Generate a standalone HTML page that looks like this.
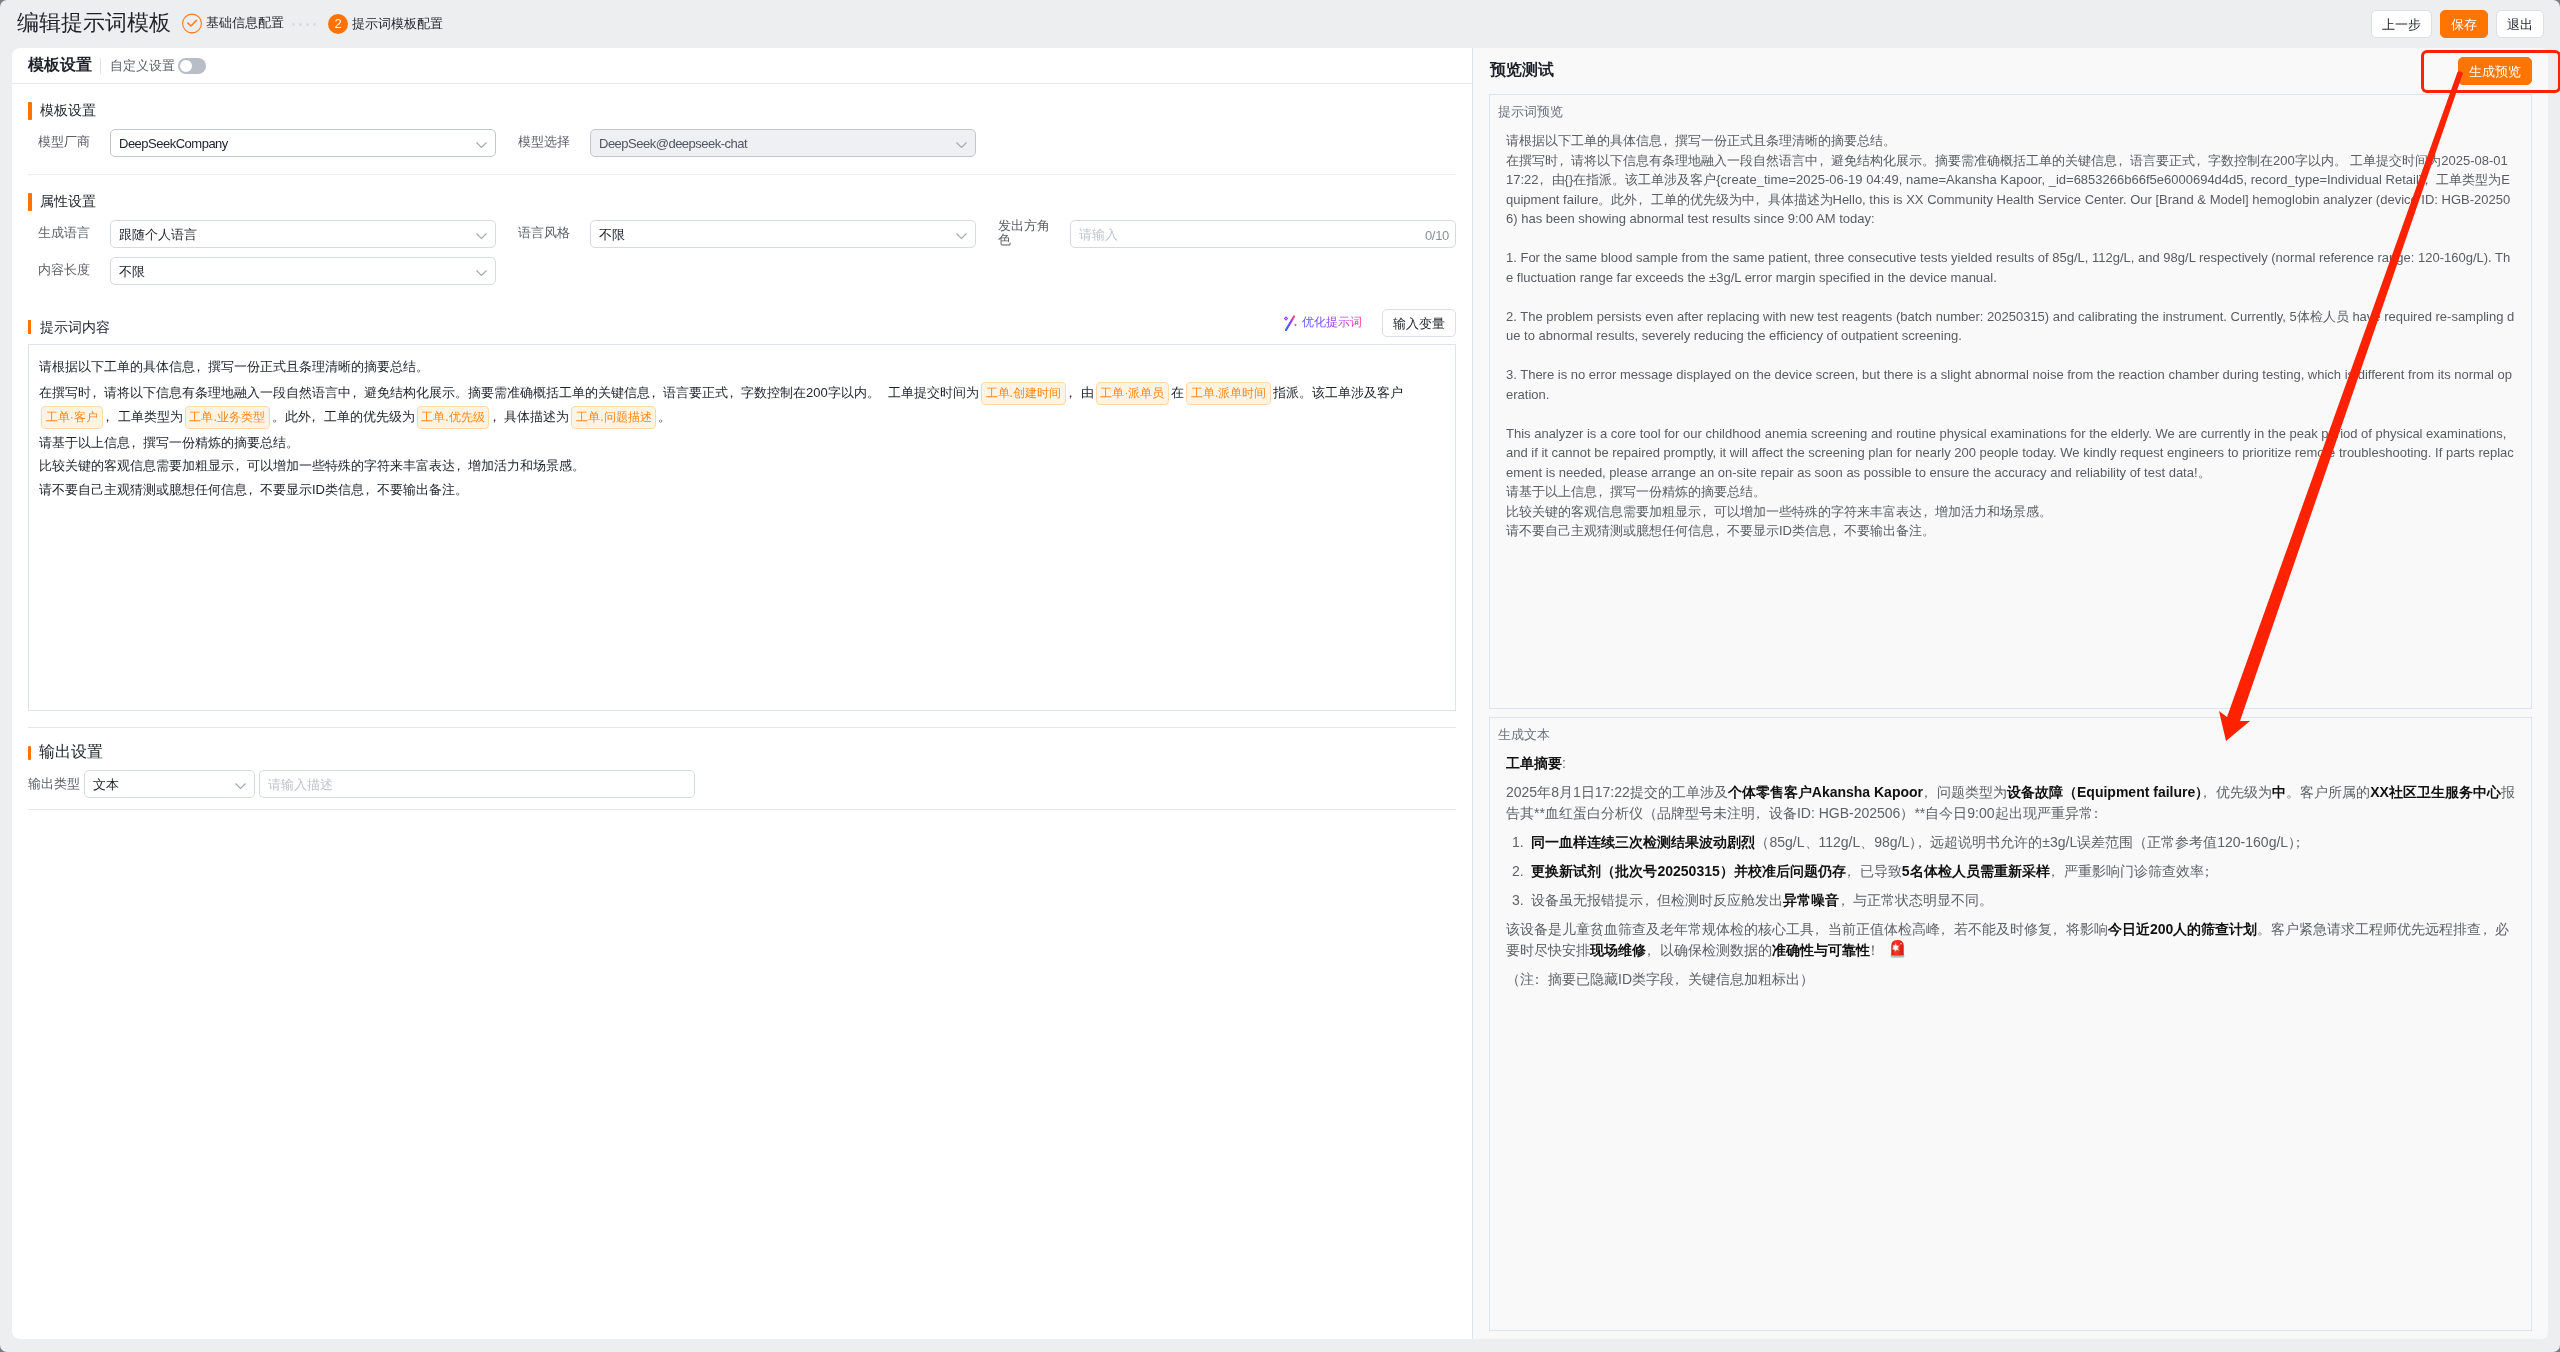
<!DOCTYPE html>
<html><head><meta charset="utf-8">
<style>
*{box-sizing:border-box;margin:0;padding:0}
html,body{width:2560px;height:1352px;overflow:hidden;background:#7b7d82}
body{font-family:"Liberation Sans",sans-serif;font-size:13px;color:#1d2129;position:relative}
#win{position:absolute;left:0;top:0;width:2560px;height:1352px;background:#edeef0;border-radius:7px;overflow:hidden;will-change:transform}
i{font-style:normal}
.p{margin-left:-0.27em;margin-right:0.27em}
.h{margin-right:-0.5em}
.ls{letter-spacing:-0.5px}
.a{position:absolute;white-space:pre}
.btn{position:absolute;height:28px;border:1px solid #dcdfe6;border-radius:5px;background:#fff;font-size:13px;line-height:27px;text-align:center;color:#1d2129}
.btn.o{background:#ff7500;border-color:#ff7500;color:#fff}
.card{position:absolute;left:12px;top:48px;width:1460px;height:1291px;background:#fff;border-radius:8px 0 0 8px}
.rp{position:absolute;left:1472px;top:48px;width:1076px;height:1291px;background:#f9f9fa;border-left:1px solid #dfe3ea;border-radius:0 7px 7px 0}
.hl{position:absolute;height:1px;background:#e4e8ee}
.bar{position:absolute;width:4px;background:#ff7300;border-radius:1px}
.sec{position:absolute;font-size:14px;color:#1d2129;line-height:16px}
.lbl{position:absolute;font-size:13px;color:#5c5f64;line-height:16px}
.sel{position:absolute;height:28px;border:1px solid #d6dae1;border-radius:5px;background:#fff}
.sel .v{position:absolute;left:8px;top:6px;line-height:16px;color:#1d2129;white-space:pre}
.chev{position:absolute;top:11.5px;width:11px;height:6px;overflow:visible}
.tag{display:inline-block;height:23px;line-height:21px;padding:0 3.8px;border:1px solid #ffd9a8;background:#fff4e3;color:#ff8617;border-radius:4px;font-size:12px;vertical-align:middle;margin:0 2px}
.pv{position:absolute;left:1506px;color:#595c61;font-size:13px;line-height:19.5px;white-space:pre}
.gl{position:absolute;left:1506px;color:#5e6166;font-size:14px;line-height:21px;white-space:pre}
.gl b{color:#111}
</style></head><body>
<div id="win">
 <!-- header -->
 <div class="a" style="left:17px;top:10px;font-size:22px;line-height:26px;color:#1d2129">编辑提示词模板</div>
 <svg class="a" style="left:181px;top:13px" width="22" height="22" viewBox="0 0 22 22"><circle cx="11" cy="10.5" r="9.4" fill="none" stroke="#ff7a1a" stroke-width="1.1"/><path d="M6.9 10.1 L10 13 L15.6 7.3" fill="none" stroke="#ff7a1a" stroke-width="1.6" stroke-linecap="round" stroke-linejoin="round"/></svg>
 <div class="a" style="left:206px;top:15px;line-height:16px;color:#1d2129">基础信息配置</div>
 <svg class="a" style="left:291px;top:22px" width="26" height="5"><circle cx="2.5" cy="2.5" r="1.5" fill="#d6dbe3"/><circle cx="9.5" cy="2.5" r="1.5" fill="#d6dbe3"/><circle cx="16.5" cy="2.5" r="1.5" fill="#d6dbe3"/><circle cx="23.5" cy="2.5" r="1.5" fill="#d6dbe3"/></svg>
 <div class="a" style="left:328px;top:14px;width:20px;height:20px;border-radius:50%;background:#ff7300;color:#fff;text-align:center;line-height:20px;font-size:13px">2</div>
 <div class="a" style="left:352px;top:15.5px;line-height:16px;color:#1d2129">提示词模板配置</div>

 <div class="btn" style="left:2371px;top:10px;width:61px">上一步</div>
 <div class="btn o" style="left:2440px;top:10px;width:48px">保存</div>
 <div class="btn" style="left:2496px;top:10px;width:48px">退出</div>

 <!-- left card -->
 <div class="card"></div>
 <div class="a" style="left:28px;top:56px;font-size:16px;line-height:18px;font-weight:bold;color:#1d2129">模板设置</div>
 <div class="a" style="left:100px;top:58px;width:1px;height:16px;background:#dfe3ea"></div>
 <div class="a" style="left:110px;top:57.5px;line-height:16px;color:#5c5f64">自定义设置</div>
 <div class="a" style="left:178px;top:58px;width:28px;height:16px;border-radius:8px;background:#b8bdc7"><div style="position:absolute;left:2px;top:2px;width:12px;height:12px;border-radius:50%;background:#fff"></div></div>
 <div class="hl" style="left:12px;top:83px;width:1460px"></div>

 <!-- 模板设置 -->
 <div class="bar" style="left:28px;top:102px;height:18px"></div>
 <div class="sec" style="left:40px;top:101.5px">模板设置</div>
 <div class="lbl" style="left:38px;top:134px">模型厂商</div>
 <div class="sel" style="left:110px;top:129px;width:386px;border-color:#c3c7ce"><div class="v ls">DeepSeekCompany</div><svg class="chev" style="left:365px" viewBox="0 0 11 6"><path d="M0.5 0.5 L5.5 5.5 L10.5 0.5" fill="none" stroke="#a3a9b2" stroke-width="1.2"/></svg></div>
 <div class="lbl" style="left:518px;top:134px">模型选择</div>
 <div class="sel" style="left:590px;top:129px;width:386px;background:#eff0f3;border-color:#c3c7ce"><div class="v ls" style="color:#4f5562">DeepSeek@deepseek-chat</div><svg class="chev" style="left:365px" viewBox="0 0 11 6"><path d="M0.5 0.5 L5.5 5.5 L10.5 0.5" fill="none" stroke="#a3a9b2" stroke-width="1.2"/></svg></div>
 <div class="hl" style="left:28px;top:174px;width:1428px;background:#eceef2"></div>

 <!-- 属性设置 -->
 <div class="bar" style="left:28px;top:193px;height:18px"></div>
 <div class="sec" style="left:40px;top:192.5px">属性设置</div>
 <div class="lbl" style="left:38px;top:225px">生成语言</div>
 <div class="sel" style="left:110px;top:220px;width:386px"><div class="v">跟随个人语言</div><svg class="chev" style="left:365px" viewBox="0 0 11 6"><path d="M0.5 0.5 L5.5 5.5 L10.5 0.5" fill="none" stroke="#a3a9b2" stroke-width="1.2"/></svg></div>
 <div class="lbl" style="left:518px;top:225px">语言风格</div>
 <div class="sel" style="left:590px;top:220px;width:386px"><div class="v">不限</div><svg class="chev" style="left:365px" viewBox="0 0 11 6"><path d="M0.5 0.5 L5.5 5.5 L10.5 0.5" fill="none" stroke="#a3a9b2" stroke-width="1.2"/></svg></div>
 <div class="lbl" style="left:998px;top:219px;line-height:14px;width:60px;white-space:normal">发出方角色</div>
 <div class="sel" style="left:1070px;top:220px;width:386px"><div class="v" style="color:#c0c4cc">请输入</div><div class="v" style="left:auto;right:6px;top:6.5px;color:#86909c;letter-spacing:-0.3px">0/10</div></div>
 <div class="lbl" style="left:38px;top:262px">内容长度</div>
 <div class="sel" style="left:110px;top:257px;width:386px"><div class="v">不限</div><svg class="chev" style="left:365px" viewBox="0 0 11 6"><path d="M0.5 0.5 L5.5 5.5 L10.5 0.5" fill="none" stroke="#a3a9b2" stroke-width="1.2"/></svg></div>

 <!-- 提示词内容 -->
 <div class="bar" style="left:28px;top:320px;height:14px;width:3.3px;border-radius:0"></div>
 <div class="sec" style="left:40px;top:318.5px">提示词内容</div>
 <svg class="a" style="left:1282px;top:315px" width="16" height="16" viewBox="0 0 16 16"><defs><linearGradient id="wg" x1="0" y1="1" x2="1" y2="0"><stop offset="0" stop-color="#2a6bff"/><stop offset="0.6" stop-color="#8a3bff"/><stop offset="1" stop-color="#ff4d6a"/></linearGradient></defs><path d="M4 15 L12 1.5" stroke="url(#wg)" stroke-width="2.2" stroke-linecap="round"/><path d="M4 2 L5.5 3.5 L4 5 L2.5 3.5 Z" fill="none" stroke="#b03cff" stroke-width="1.1"/><circle cx="13.5" cy="10" r="0.9" fill="#d040c0"/></svg>
 <div class="a" style="left:1302px;top:315px;font-size:12px;line-height:15px;background:linear-gradient(90deg,#4d5bff,#9a3cff 55%,#ff3d8b);-webkit-background-clip:text;background-clip:text;color:transparent">优化提示词</div>
 <div class="btn" style="left:1382px;top:309px;width:74px">输入变量</div>

 <div class="a" style="left:28px;top:344px;width:1428px;height:367px;border:1px solid #dfe3ea;background:#fff"></div>
 <div class="a" style="left:39px;top:359px;line-height:16px;color:#1d2129">请根据以下工单的具体信息<i class="p">，</i>撰写一份正式且条理清晰的摘要总结。</div>
 <div class="a" style="left:39px;top:381px;line-height:24px;color:#1d2129">在撰写时<i class="p">，</i>请将以下信息有条理地融入一段自然语言中<i class="p">，</i>避免结构化展示。摘要需准确概括工单的关键信息<i class="p">，</i>语言要正式<i class="p">，</i>字数控制在200字以内。<i style="display:inline-block;width:8px"></i>工单提交时间为<span class="tag">工单.创建时间</span><i class="p">，</i>由<span class="tag">工单·派单员</span>在<span class="tag">工单.派单时间</span>指派。该工单涉及客户</div>
 <div class="a" style="left:39px;top:405px;line-height:24px;color:#1d2129"><span class="tag">工单·客户</span><i class="p">，</i>工单类型为<span class="tag">工单.业务类型</span>。此外<i class="p">，</i>工单的优先级为<span class="tag">工单.优先级</span><i class="p">，</i>具体描述为<span class="tag">工单.问题描述</span>。</div>
 <div class="a" style="left:39px;top:435px;line-height:16px;color:#1d2129">请基于以上信息<i class="p">，</i>撰写一份精炼的摘要总结。</div>
 <div class="a" style="left:39px;top:458px;line-height:16px;color:#1d2129">比较关键的客观信息需要加粗显示<i class="p">，</i>可以增加一些特殊的字符来丰富表达<i class="p">，</i>增加活力和场景感。</div>
 <div class="a" style="left:39px;top:482px;line-height:16px;color:#1d2129">请不要自己主观猜测或臆想任何信息<i class="p">，</i>不要显示ID类信息<i class="p">，</i>不要输出备注。</div>

 <div class="hl" style="left:28px;top:727px;width:1428px"></div>
 <div class="bar" style="left:28px;top:746px;height:14px;width:3px"></div>
 <div class="a" style="left:39px;top:743px;font-size:16px;line-height:18px;color:#1d2129">输出设置</div>
 <div class="lbl" style="left:28px;top:776px">输出类型</div>
 <div class="sel" style="left:84px;top:770px;width:171px;height:28px"><div class="v">文本</div><svg class="chev" style="left:150px" viewBox="0 0 11 6"><path d="M0.5 0.5 L5.5 5.5 L10.5 0.5" fill="none" stroke="#a3a9b2" stroke-width="1.2"/></svg></div>
 <div class="sel" style="left:259px;top:770px;width:436px;height:28px"><div class="v" style="color:#c0c4cc">请输入描述</div></div>
 <div class="hl" style="left:28px;top:809px;width:1428px"></div>

 <!-- right panel -->
 <div class="rp"></div>
 <div class="a" style="left:1490px;top:61px;font-size:16px;line-height:18px;font-weight:bold;color:#1d2129">预览测试</div>
 <div class="btn o" style="left:2458px;top:57px;width:74px;height:28px;line-height:27px">生成预览</div>

 <div class="a" style="left:1489px;top:94px;width:1043px;height:615px;border:1px solid #dfe3ea;background:#f9f9fa"></div>
 <div class="a" style="left:1498px;top:104px;line-height:16px;color:#6b7079">提示词预览</div>
 <div class="pv" style="top:131px">请根据以下工单的具体信息<i class="p">，</i>撰写一份正式且条理清晰的摘要总结。
在撰写时<i class="p">，</i>请将以下信息有条理地融入一段自然语言中<i class="p">，</i>避免结构化展示。摘要需准确概括工单的关键信息<i class="p">，</i>语言要正式<i class="p">，</i>字数控制在200字以内。 工单提交时间为2025-08-01
17:22<i class="p">，</i>由{}在指派。该工单涉及客户{create_time=2025-06-19 04:49, name=Akansha Kapoor, _id=6853266b66f5e6000694d4d5, record_type=Individual Retail}<i class="p">，</i>工单类型为E
quipment failure。此外<i class="p">，</i>工单的优先级为中<i class="p">，</i>具体描述为Hello, this is XX Community Health Service Center. Our [Brand &amp; Model] hemoglobin analyzer (device ID: HGB-20250
6) has been showing abnormal test results since 9:00 AM today:

1. For the same blood sample from the same patient, three consecutive tests yielded results of 85g/L, 112g/L, and 98g/L respectively (normal reference range: 120-160g/L). Th
e fluctuation range far exceeds the ±3g/L error margin specified in the device manual.

2. The problem persists even after replacing with new test reagents (batch number: 20250315) and calibrating the instrument. Currently, 5体检人员 have required re-sampling d
ue to abnormal results, severely reducing the efficiency of outpatient screening.

3. There is no error message displayed on the device screen, but there is a slight abnormal noise from the reaction chamber during testing, which is different from its normal op
eration.

This analyzer is a core tool for our childhood anemia screening and routine physical examinations for the elderly. We are currently in the peak period of physical examinations,
and if it cannot be repaired promptly, it will affect the screening plan for nearly 200 people today. We kindly request engineers to prioritize remote troubleshooting. If parts replac
ement is needed, please arrange an on-site repair as soon as possible to ensure the accuracy and reliability of test data!。
请基于以上信息<i class="p">，</i>撰写一份精炼的摘要总结。
比较关键的客观信息需要加粗显示<i class="p">，</i>可以增加一些特殊的字符来丰富表达<i class="p">，</i>增加活力和场景感。
请不要自己主观猜测或臆想任何信息<i class="p">，</i>不要显示ID类信息<i class="p">，</i>不要输出备注。</div>

 <div class="a" style="left:1489px;top:717px;width:1043px;height:614px;border:1px solid #dfe3ea;background:#f9f9fa"></div>
 <div class="a" style="left:1498px;top:727px;line-height:16px;color:#6b7079">生成文本</div>
 <div class="gl" style="top:752.5px"><b>工单摘要</b>:</div>
 <div class="gl" style="top:781.5px">2025年8月1日17:22提交的工单涉及<b>个体零售客户Akansha Kapoor</b><i class="p">，</i>问题类型为<b>设备故障（Equipment failure<i class="h">）</i></b><i class="p">，</i>优先级为<b>中</b>。客户所属的<b>XX社区卫生服务中心</b>报
告其**血红蛋白分析仪（品牌型号未注明<i class="p">，</i>设备ID: HGB-202506）**自今日9:00起出现严重异常<i class="p">：</i></div>
 <div class="gl" style="top:831.5px;left:1512px">1.  <b>同一血样连续三次检测结果波动剧烈</b>（85g/L、112g/L、98g/L<i class="h">）</i><i class="p">，</i>远超说明书允许的±3g/L误差范围（正常参考值120-160g/L<i class="h">）</i><i class="p">；</i></div>
 <div class="gl" style="top:860.5px;left:1512px">2.  <b>更换新试剂（批次号20250315）并校准后问题仍存</b><i class="p">，</i>已导致<b>5名体检人员需重新采样</b><i class="p">，</i>严重影响门诊筛查效率<i class="p">；</i></div>
 <div class="gl" style="top:889.5px;left:1512px">3.  设备虽无报错提示<i class="p">，</i>但检测时反应舱发出<b>异常噪音</b><i class="p">，</i>与正常状态明显不同。</div>
 <div class="gl" style="top:918.5px">该设备是儿童贫血筛查及老年常规体检的核心工具<i class="p">，</i>当前正值体检高峰<i class="p">，</i>若不能及时修复<i class="p">，</i>将影响<b>今日近200人的筛查计划</b>。客户紧急请求工程师优先远程排查<i class="p">，</i>必
要时尽快安排<b>现场维修</b><i class="p">，</i>以确保检测数据的<b>准确性与可靠性</b><i class="p">！</i> </div>
 <svg class="a" style="left:1890px;top:939px" width="15" height="20" viewBox="0 0 15 20"><defs><linearGradient id="sb" x1="0" y1="0" x2="1" y2="0"><stop offset="0" stop-color="#c81a10"/><stop offset="0.35" stop-color="#ff3a22"/><stop offset="1" stop-color="#d21c10"/></linearGradient><linearGradient id="sbase" x1="0" y1="0" x2="0" y2="1"><stop offset="0" stop-color="#9a9a9a"/><stop offset="1" stop-color="#c8c8c8"/></linearGradient><radialGradient id="sw" cx="0.5" cy="0.5" r="0.5"><stop offset="0" stop-color="#fff"/><stop offset="0.45" stop-color="#fff" stop-opacity="0.9"/><stop offset="1" stop-color="#fff" stop-opacity="0"/></radialGradient></defs><rect x="0.8" y="14.6" width="13.4" height="4.2" rx="1.6" fill="url(#sbase)"/><path d="M1.3 16 L1.3 6.8 Q1.3 1 7.5 1 Q13.7 1 13.7 6.8 L13.7 16 Q7.5 17.2 1.3 16 Z" fill="url(#sb)"/><circle cx="5.6" cy="8.6" r="3.6" fill="url(#sw)"/><path d="M5.6 3.6 L6.3 7.6 L10 6.2 L6.9 8.8 L9.6 12 L6 10 L4.8 13.6 L4.9 9.8 L1.6 10.6 L4.4 8.4 L2.2 5.4 L5.2 7.4 Z" fill="#fff" opacity="0.85"/><circle cx="11" cy="4.6" r="0.9" fill="#f4d8ff" opacity="0.8"/></svg>
 <div class="gl" style="top:968.5px">（注<i class="p">：</i>摘要已隐藏ID类字段<i class="p">，</i>关键信息加粗标出）</div>

 <!-- annotation -->
 <div class="a" style="left:2421px;top:50px;width:140px;height:43px;border:3px solid #ff2200;border-radius:6px"></div>
 <svg class="a" style="left:0;top:0" width="2560" height="1352" viewBox="0 0 2560 1352">
  <path d="M2457.5 72 Q2460 70 2463 73 L2240 721 L2250 721 L2226 741 L2219 711 L2227 717 Z" fill="#ff2200"/>
 </svg>
</div>
</body></html>
